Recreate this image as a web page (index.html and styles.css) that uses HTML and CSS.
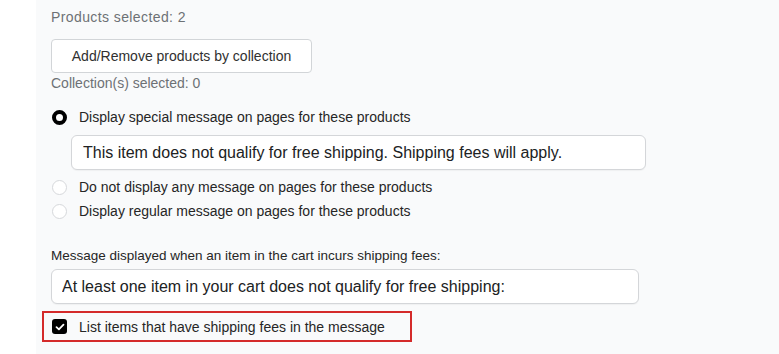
FILE: index.html
```html
<!DOCTYPE html>
<html lang="en">
<head>
<meta charset="UTF-8">
<meta name="viewport" content="width=device-width, initial-scale=1.0">
<title>Shipping Message Settings</title>
<link rel="stylesheet" href="styles.css">
</head>
<body>

<div class="panel">
  <div class="muted products">Products selected: 2</div>

  <button type="button" class="btn">Add/Remove products by collection</button>
  <div class="muted collections">Collection(s) selected: 0</div>

  <div class="radio-row first">
    <span class="radio checked"></span>
    <span class="label">Display special message on pages for these products</span>
  </div>
  <input type="text" class="text-input special" value="This item does not qualify for free shipping. Shipping fees will apply.">

  <div class="radio-row second">
    <span class="radio"></span>
    <span class="label">Do not display any message on pages for these products</span>
  </div>
  <div class="radio-row third">
    <span class="radio"></span>
    <span class="label">Display regular message on pages for these products</span>
  </div>

  <div class="field-label">Message displayed when an item in the cart incurs shipping fees:</div>
  <input type="text" class="text-input cart" value="At least one item in your cart does not qualify for free shipping:">

  <div class="check-row">
    <span class="checkbox">
      <svg width="10" height="8" viewBox="0 0 10 8"><path d="M1.5 4.2 L3.9 6.4 L8.5 1.6" fill="none" stroke="#fff" stroke-width="1.8" stroke-linecap="round" stroke-linejoin="round"/></svg>
    </span>
    <span class="label">List items that have shipping fees in the message</span>
  </div>
</div>

</body>
</html>
```

FILE: styles.css
```css
body {
  margin: 0;
  font-family: "Liberation Sans", Arial, sans-serif;
  background: #fff;
}
.panel {
  margin-left: 36px;
  padding: 9px 15px 20px;
  background: #f9fafb;
  min-height: 325px;
}
.muted {
  font-size: 14px;
  line-height: 16px;
  color: #6d7175;
}
.products {
  letter-spacing: 0.4px;
}
.btn {
  display: block;
  margin-top: 14px;
  width: 261px;
  height: 34px;
  padding: 0;
  background: #fff;
  border: 1px solid #d2d5d8;
  border-radius: 4px;
  font-family: inherit;
  font-size: 14px;
  color: #303030;
}
.collections {
  margin-top: 2px;
}
.radio-row {
  display: flex;
  align-items: center;
  height: 20px;
}
.radio-row.first {
  margin-top: 16px;
}
.radio-row.second {
  margin-top: 7px;
}
.radio-row.third {
  margin-top: 4px;
}
.radio {
  box-sizing: border-box;
  width: 15px;
  height: 15px;
  margin-left: 1px;
  margin-right: 12px;
  border-radius: 50%;
  border: 1px solid #d6d8db;
  background: #fff;
}
.radio.checked {
  border: 4.5px solid #000;
}
.label {
  font-size: 14px;
  color: #262626;
}
.text-input {
  display: block;
  box-sizing: border-box;
  height: 35px;
  padding: 0 11px;
  background: #fff;
  border: 1px solid #d4d6d9;
  border-radius: 6px;
  box-shadow: 0 1px 1px rgba(0, 0, 0, 0.04);
  font-family: inherit;
  font-size: 16px;
  color: #202223;
}
.text-input.special {
  margin-top: 8px;
  margin-left: 20px;
  width: 575px;
}
.text-input.cart {
  margin-top: 5px;
  width: 588px;
  padding: 0 10px;
}
.field-label {
  margin-top: 27px;
  font-size: 13.5px;
  line-height: 16px;
  color: #262626;
}
.check-row {
  display: flex;
  align-items: center;
  box-sizing: border-box;
  width: 370px;
  height: 31px;
  margin-top: 7px;
  margin-left: -9px;
  padding-left: 8px;
  border: 2px solid #d42a2a;
}
.checkbox {
  display: flex;
  align-items: center;
  justify-content: center;
  width: 15px;
  height: 15px;
  margin-right: 12px;
  border-radius: 3px;
  background: #000;
}
```
